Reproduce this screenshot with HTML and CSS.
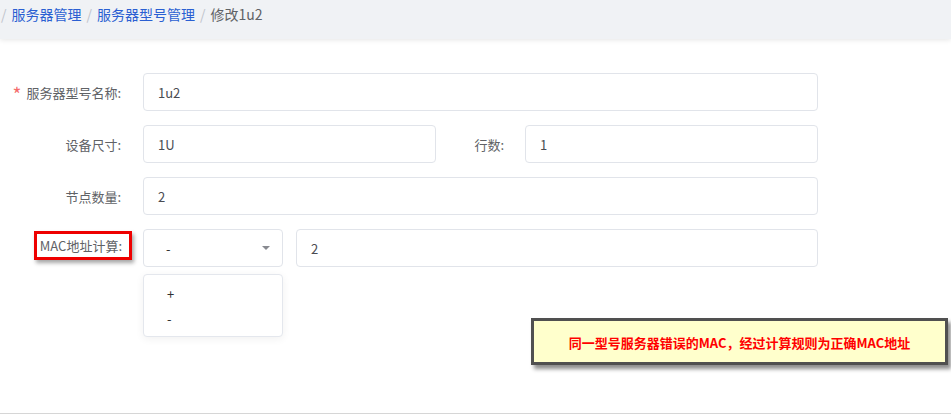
FILE: index.html
```html
<!DOCTYPE html>
<html lang="zh-CN">
<head>
<meta charset="utf-8">
<title>修改1u2</title>
<link rel="stylesheet" href="styles.css">
</head>
<body>
<div class="page">
  <header class="topbar">
    <nav class="crumbs">
      <span class="sep sep-first">/</span>
      <a class="crumb-link">服务器管理</a>
      <span class="sep">/</span>
      <a class="crumb-link">服务器型号管理</a>
      <span class="sep">/</span>
      <span class="crumb-current">修改1u2</span>
    </nav>
  </header>
  <main class="main">
    <form class="form">
      <div class="row">
        <label class="label"><span class="req">*</span>服务器型号名称:</label>
        <div class="input input-full">1u2</div>
      </div>
      <div class="row">
        <label class="label">设备尺寸:</label>
        <div class="input input-half">1U</div>
        <label class="label label-mid">行数:</label>
        <div class="input input-half2">1</div>
      </div>
      <div class="row">
        <label class="label">节点数量:</label>
        <div class="input input-full">2</div>
      </div>
      <div class="row">
        <label class="label label-mark"><span class="mark">MAC地址计算:</span></label>
        <div class="select">
          <div class="input select-box">
            <span>-</span>
            <span class="caret"></span>
          </div>
          <ul class="dropdown">
            <li class="dd-item">+</li>
            <li class="dd-item">-</li>
          </ul>
        </div>
        <div class="input input-rest">2</div>
      </div>
    </form>
    <div class="note-wrap">
      <div class="note">同一型号服务器错误的MAC，经过计算规则为正确MAC地址</div>
    </div>
  </main>
</div>
</body>
</html>
```

FILE: styles.css
```css
* { box-sizing: border-box; }
html, body {
  margin: 0;
  padding: 0;
  background: #fff;
}
body {
  font-family: "Microsoft YaHei", "Noto Sans CJK SC", "Noto Sans", sans-serif;
  font-size: 13px;
  color: #606266;
}
.page {
  width: 951px;
  height: 415px;
  overflow: hidden;
}
.topbar {
  height: 39px;
  background: #f0f2f5;
  box-shadow: 0 1px 5px rgba(0, 0, 0, 0.1);
  position: relative;
  z-index: 1;
}
.crumbs {
  display: flex;
  align-items: center;
  height: 28px;
  font-size: 14px;
}
.sep {
  color: #c0c4cc;
  margin: 0 5px;
}
.sep-first { margin-left: 1px; }
.crumb-link {
  color: #2a5fd2;
  text-decoration: none;
}
.crumb-current { color: #606266; }

.main {
  height: 375px;
  border-bottom: 1px solid #d6d6d6;
  padding-top: 34px;
}
.form {
  width: 818px;
}
.row {
  display: flex;
  align-items: center;
  height: 38px;
  margin-bottom: 14px;
}
.row:last-child { margin-bottom: 0; }
.label {
  width: 143px;
  flex: none;
  text-align: right;
  padding-right: 22px;
  color: #606266;
  font-size: 13px;
  display: flex;
  align-items: center;
  justify-content: flex-end;
}
.req {
  color: #f56c6c;
  margin-right: 5px;
  font-size: 19px;
  line-height: 1;
  margin-top: 2px;
}
.label-mid {
  width: 89px;
  padding-right: 21px;
}
.label-mark {
  padding-right: 11px;
}
.mark {
  display: inline-block;
  border: 3px solid #ee0000;
  padding: 1px 7px 1px 3px;
  line-height: 21px;
  margin-bottom: 5px;
  box-shadow: 2px 3px 4px rgba(0, 0, 0, 0.35);
}
.input {
  height: 38px;
  border: 1px solid #e1e4ea;
  border-radius: 4px;
  padding: 0 14px;
  display: flex;
  align-items: center;
  color: #4a4c52;
  font-size: 13px;
  background: #fff;
}
.input-full { width: 675px; }
.input-half { width: 293px; }
.input-half2 { width: 293px; }
.select {
  position: relative;
  width: 140px;
  margin-right: 13px;
}
.select-box {
  width: 140px;
  justify-content: space-between;
  padding-left: 22px;
  padding-right: 12px;
  color: #303133;
}
.caret {
  width: 0;
  height: 0;
  border-left: 4px solid transparent;
  border-right: 4px solid transparent;
  border-top: 4px solid #888a90;
  margin-top: -1px;
}
.dropdown {
  position: absolute;
  top: 45px;
  left: 0;
  width: 140px;
  height: 63px;
  margin: 0;
  padding: 6px 0 0;
  list-style: none;
  border: 1px solid #e4e7ed;
  border-radius: 4px;
  background: #fff;
  box-shadow: 0 2px 8px rgba(0, 0, 0, 0.06);
}
.dd-item {
  height: 25px;
  line-height: 25px;
  padding-left: 23px;
  color: #303133;
  font-size: 13px;
}
.input-rest { width: 522px; }

.note-wrap {
  display: flex;
  justify-content: flex-end;
  padding-right: 3px;
  margin-top: 51px;
}
.note {
  width: 417px;
  height: 47px;
  border: 3px solid #505050;
  background: #ffffcc;
  box-shadow: 3px 4px 4px rgba(0, 0, 0, 0.45);
  color: #ff0000;
  font-weight: bold;
  font-size: 13px;
  display: flex;
  align-items: center;
  justify-content: center;
  padding-top: 1px;
}
```
